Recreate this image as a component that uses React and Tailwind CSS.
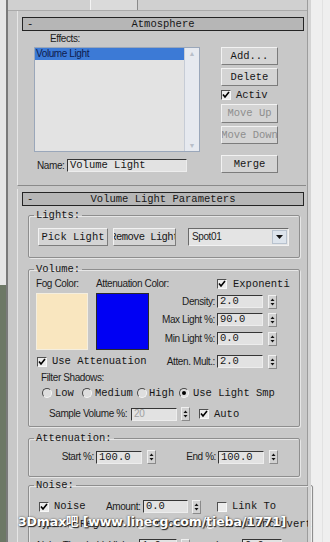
import React from "react";

const monoF = "font-['Liberation_Mono',monospace] text-[10.5px]";
const mono = `${monoF} leading-none text-[#161616]`;
const sansF = "font-['Liberation_Sans',Arial,sans-serif] text-[10px] tracking-[-0.4px]";
const sans = `${sansF} leading-none text-[#1c1c1c]`;

function Btn({ children, className = "", disabled }) {
  return (
    <div
      className={`flex items-center justify-center overflow-hidden whitespace-nowrap h-[18px] bg-[#d4d4d4] border border-t-[#f2f2f2] border-l-[#f2f2f2] border-b-[#7c7c7c] border-r-[#7c7c7c] ${monoF} leading-none ${
        disabled ? "text-[#8e8e8e]" : "text-[#161616]"
      } ${className}`}
    >
      {children}
    </div>
  );
}

function Check({ on, className = "" }) {
  return (
    <span
      className={`flex items-center justify-center w-[10px] h-[10px] shrink-0 bg-[#ececec] border border-t-[#505050] border-l-[#505050] border-b-[#f8f8f8] border-r-[#f8f8f8] ${className}`}
    >
      {on && (
        <svg width="8" height="8" viewBox="0 0 8 8">
          <path d="M1 3.5 L3 6 L7 1" stroke="#000" strokeWidth="1.6" fill="none" />
        </svg>
      )}
    </span>
  );
}

function Radio({ on }) {
  return (
    <span className="flex items-center justify-center w-[10px] h-[10px] shrink-0 rounded-full bg-[#dedede] border border-t-[#4a4a4a] border-l-[#4a4a4a] border-b-[#f4f4f4] border-r-[#f4f4f4]">
      {on && <span className="w-[4px] h-[4px] rounded-full bg-black" />}
    </span>
  );
}

function Field({ value, className = "", disabled, font = monoF }) {
  return (
    <div
      className={`h-[13px] flex items-center pl-[2px] overflow-hidden whitespace-nowrap bg-[#e2e2e2] border border-t-[#353535] border-l-[#353535] border-b-[#ededed] border-r-[#ededed] ${font} leading-none ${
        disabled ? "text-[#a0a0a0]" : "text-[#161616]"
      } ${className}`}
    >
      {value}
    </div>
  );
}

function Spin({ className = "" }) {
  return (
    <div className={`w-[9px] h-[14px] shrink-0 bg-[#d2d2d2] border border-t-[#f0f0f0] border-l-[#f0f0f0] border-b-[#8a8a8a] border-r-[#8a8a8a] ${className}`}>
      <svg width="7" height="12" viewBox="0 0 7 12">
        <path d="M1.5 5 L3.5 2.5 L5.5 5 Z" fill="#111" />
        <path d="M1.5 7 L3.5 9.5 L5.5 7 Z" fill="#111" />
      </svg>
    </div>
  );
}

function TitleBar({ title }) {
  return (
    <div className="ml-[4px] w-[282px] h-[14px] shrink-0 flex items-center bg-[#b6b6b6] border border-[#242424]">
      <span className={`w-[16px] pl-[4px] ${mono}`}>-</span>
      <span className={`flex-1 text-center ${mono}`}>{title}</span>
      <span className="w-[16px]" />
    </div>
  );
}

function Group({ label, className = "", children }) {
  return (
    <fieldset className={`ml-[10px] w-[272px] shrink-0 border border-[#8e8e8e] rounded-[2px] shadow-[inset_1px_1px_0_#e6e6e6,1px_1px_0_#e6e6e6] ${className}`}>
      <legend className={`ml-[5px] px-[2px] h-[14px] leading-[14px] ${monoF} text-[#161616]`}>{label}</legend>
      {children}
    </fieldset>
  );
}

function SpinRow({ label, value, className = "", labelW = "w-[68px]" }) {
  return (
    <div className={`flex items-center h-[13px] ${className}`}>
      <span className={`${labelW} pr-[2px] text-right whitespace-nowrap ${sans}`}>{label}</span>
      <Field value={value} className="w-[46px]" />
      <Spin className="ml-[5px]" />
    </div>
  );
}

export default function App() {
  return (
    <div className="relative w-[330px] h-[542px] overflow-hidden flex bg-[#efefef]">
      <div className="w-[6px] flex flex-col">
        <div className="h-[285px] bg-[#e6e6e6]" />
        <div className="flex-1 bg-[#6d7866]" />
      </div>
      <div className="w-[2px] bg-[#7a7a7a]" />

      <div className="w-[300px] bg-[#c8c8c8] border-r border-[#9c9c9c] flex flex-col">
        {/* tabs */}
        <div className="h-[11px] shrink-0 bg-[#d0d0d0] border-b border-[#aaaaaa] flex">
          <div className="ml-[82px] w-[48px] h-[10px] bg-[#dadada] border-l border-[#f4f4f4] border-r border-r-[#8a8a8a]" />
        </div>

        {/* Atmosphere rollout */}
        <div className="ml-[9px] w-[289px] h-[175px] shrink-0 border-l border-[#e6e6e6] border-b border-b-[#8a8a8a] flex flex-col">
          <div className="mt-[6px]">
            <TitleBar title="Atmosphere" />
          </div>
          <div className="flex">
            <div className="ml-[16px] w-[166px] flex flex-col">
              <div className={`h-[16px] pl-[16px] flex items-center ${sans}`}>Effects:</div>
              <div className="h-[105px] flex bg-[#e3e3e3] border border-[#9aa7ba]">
                <div className="flex-1">
                  <div className={`h-[12px] flex items-center pl-[1px] bg-[#3c7ad6] ${sansF} leading-none text-[#0e1c4e]`}>
                    Volume Light
                  </div>
                </div>
                <div className="w-[15px] bg-[#e6e9ef] border-l border-[#c6ccd6] flex flex-col justify-between items-center py-[2px]">
                  <span className="text-[7px] leading-none text-[#b8bec8]">▲</span>
                  <span className="text-[7px] leading-none text-[#b8bec8]">▼</span>
                </div>
              </div>
              <div className="mt-[7px] h-[13px] flex items-center">
                <span className={`w-[33px] pl-[3px] ${sans}`}>Name:</span>
                <Field value="Volume Light" className="w-[120px]" />
              </div>
            </div>
            <div className="ml-[21px] w-[57px] flex flex-col">
              <Btn className="mt-[16px]">Add...</Btn>
              <Btn className="mt-[3px]">Delete</Btn>
              <div className="mt-[3px] h-[12px] flex items-center">
                <Check on />
                <span className={`ml-[5px] ${mono}`}>Activ</span>
              </div>
              <Btn className="mt-[3px] h-[19px]" disabled>
                Move Up
              </Btn>
              <Btn className="mt-[3px]" disabled>
                Move Down
              </Btn>
              <Btn className="mt-[11px]">Merge</Btn>
            </div>
          </div>
        </div>

        {/* Volume Light Parameters rollout */}
        <div className="mt-[3px] ml-[9px] w-[289px] flex-1 border-l border-[#e6e6e6] flex flex-col">
          <div className="mt-[3px]">
            <TitleBar title="Volume Light Parameters" />
          </div>

          <Group label="Lights:" className="mt-[2px] pb-[11px]">
            <div className="mt-[6px] flex items-center">
              <Btn className="ml-[9px] w-[70px]">Pick Light</Btn>
              <Btn className="ml-[5px] w-[63px] tracking-[-0.6px]">Remove Light</Btn>
              <div className="ml-[12px] w-[101px] h-[18px] flex items-center bg-[#e4e4e4] border border-t-[#6a6a6a] border-l-[#6a6a6a] border-b-[#f2f2f2] border-r-[#f2f2f2]">
                <span className={`flex-1 pl-[3px] ${sans}`}>Spot01</span>
                <span className="w-[15px] h-[14px] mr-[1px] flex items-center justify-center bg-[#dde4ec] border border-[#b8c2ce]">
                  <svg width="7" height="4" viewBox="0 0 7 4">
                    <path d="M0 0 L7 0 L3.5 4 Z" fill="#111" />
                  </svg>
                </span>
              </div>
            </div>
          </Group>

          <Group label="Volume:" className="mt-[4px] pb-[5px]">
            <div className="mt-[2px] h-[12px] flex items-center">
              <span className={`ml-[7px] w-[60px] ${sans}`}>Fog Color:</span>
              <span className={`w-[121px] whitespace-nowrap ${sans}`}>Attenuation Color:</span>
              <Check on />
              <span className={`ml-[6px] w-[57px] overflow-hidden whitespace-nowrap ${mono}`}>Exponential</span>
            </div>
            <div className="mt-[3px] flex items-start">
              <div className="ml-[7px] w-[52px] h-[57px] bg-[#f9e6bf] border border-[#f4eedf]" />
              <div className="ml-[8px] w-[53px] h-[57px] bg-[#0000f4] border border-[#2a2a2a]" />
              <div className="w-[128px] flex flex-col">
                <SpinRow label="Density:" value="2.0" className="mt-[2px]" />
                <SpinRow label="Max Light %:" value="90.0" className="mt-[5px]" />
                <SpinRow label="Min Light %:" value="0.0" className="mt-[6px]" />
              </div>
            </div>
            <div className="mt-[5px] flex items-center">
              <div className="w-[120px] flex items-center">
                <Check on className="ml-[8px]" />
                <span className={`ml-[5px] whitespace-nowrap ${mono}`}>Use Attenuation</span>
              </div>
              <SpinRow label="Atten. Mult.:" value="2.0" className="w-[128px]" />
            </div>
            <div className={`mt-[4px] h-[12px] ml-[12px] flex items-center ${sans}`}>Filter Shadows:</div>
            <div className="mt-[3px] h-[12px] ml-[13px] flex items-center">
              <div className="w-[40px] flex items-center">
                <Radio />
                <span className={`ml-[3px] ${mono}`}>Low</span>
              </div>
              <div className="w-[55px] flex items-center">
                <Radio />
                <span className={`ml-[3px] ${mono}`}>Medium</span>
              </div>
              <div className="w-[42px] flex items-center">
                <Radio />
                <span className={`ml-[2px] ${mono}`}>High</span>
              </div>
              <div className="flex items-center whitespace-nowrap">
                <Radio on />
                <span className={`ml-[4px] ${mono}`}>Use Light Smp</span>
              </div>
            </div>
            <div className="mt-[8px] h-[14px] flex items-center">
              <span className={`ml-[20px] w-[80px] whitespace-nowrap ${sans}`}>Sample Volume %:</span>
              <Field value="20" disabled font={sansF} className="ml-[2px] w-[46px]" />
              <Spin className="ml-[4px]" />
              <Check on className="ml-[9px]" />
              <span className={`ml-[5px] ${mono}`}>Auto</span>
            </div>
          </Group>

          <Group label="Attenuation:" className="mt-[4px] pb-[12px]">
            <div className="mt-[5px] flex items-center">
              <SpinRow label="Start %:" value="100.0" labelW="w-[67px]" />
              <span className={`w-[62px] pr-[2px] text-right ${sans}`}>End %:</span>
              <Field value="100.0" className="w-[46px]" />
              <Spin className="ml-[5px]" />
            </div>
          </Group>

          <Group label="Noise:" className="mt-[1px] flex-1">
            <div className="mt-[8px] h-[13px] flex items-center">
              <Check on className="ml-[10px]" />
              <span className={`ml-[5px] w-[52px] ${mono}`}>Noise</span>
              <span className={`w-[35px] whitespace-nowrap ${sans}`}>Amount:</span>
              <Field value="0.0" className="ml-[2px] w-[45px]" />
              <Spin className="ml-[4px]" />
              <Check className="ml-[16px]" />
              <span className={`ml-[5px] whitespace-nowrap ${mono}`}>Link To</span>
            </div>
            <div className="mt-[5px] h-[12px] flex items-center">
              <span className={`ml-[8px] w-[30px] ${sans}`}>Type:</span>
              <Radio on />
              <span className={`ml-[3px] w-[56px] ${mono}`}>Regular</span>
              <Radio />
              <span className={`ml-[3px] w-[56px] ${mono}`}>Fractal</span>
              <Radio />
              <span className={`ml-[3px] w-[56px] overflow-hidden whitespace-nowrap ${mono}`}>Turbulence</span>
              <span className={mono}>Invert</span>
            </div>
            <div className="mt-[9px] h-[13px] flex items-center">
              <span className={`ml-[8px] w-[102px] whitespace-nowrap ${sans}`}>Noise Threshold: High:</span>
              <Field value="1.0" className="w-[38px]" />
              <Spin className="ml-[4px]" />
              <span className="ml-[12px] w-[6px] h-[6px] rounded-full bg-[#4a4af0]" />
              <span className={`ml-[8px] w-[26px] ${sans}`}>Low:</span>
              <Field value="0.0" className="w-[40px]" />
              <span className="ml-[5px] w-[6px] h-[6px] rounded-full bg-[#4a4af0]" />
            </div>
          </Group>
        </div>
      </div>

      <div className="flex-1 flex">
        <div className="w-[3px] bg-[#d4d4d4]" />
        <div className="w-[11px]" />
        <div className="w-[1px] bg-[#e2e2e2]" />
      </div>

      <div className="absolute left-[18px] top-[516px] whitespace-nowrap font-['DejaVu_Sans','Noto_Sans_CJK_SC',sans-serif] font-bold text-[12.5px] tracking-[-0.1px] leading-none text-white [text-shadow:1px_1px_1px_#222,0_0_2px_#444]">
        3Dmax吧 [www.linecg.com/tieba/1771]
      </div>
    </div>
  );
}
